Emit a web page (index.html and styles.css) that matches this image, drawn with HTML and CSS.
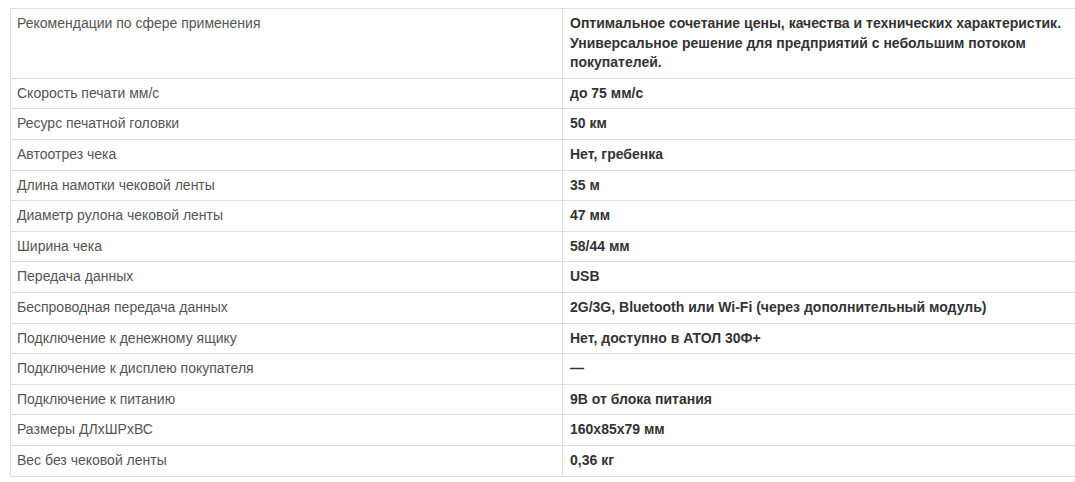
FILE: index.html
```html
<!DOCTYPE html>
<html lang="ru">
<head>
<meta charset="utf-8">
<link rel="stylesheet" href="styles.css">
</head>
<body>
<table class="specs">
  <colgroup><col class="col-name"><col class="col-value"></colgroup>
  <tbody>
    <tr><td>Рекомендации по сфере применения</td><td>Оптимальное сочетание цены, качества и технических характеристик. Универсальное решение для предприятий с небольшим потоком покупателей.</td></tr>
    <tr><td>Скорость печати мм/с</td><td>до 75 мм/с</td></tr>
    <tr><td>Ресурс печатной головки</td><td>50 км</td></tr>
    <tr><td>Автоотрез чека</td><td>Нет, гребенка</td></tr>
    <tr><td>Длина намотки чековой ленты</td><td>35 м</td></tr>
    <tr><td>Диаметр рулона чековой ленты</td><td>47 мм</td></tr>
    <tr><td>Ширина чека</td><td>58/44 мм</td></tr>
    <tr><td>Передача данных</td><td>USB</td></tr>
    <tr><td>Беспроводная передача данных</td><td>2G/3G, Bluetooth или Wi-Fi (через дополнительный модуль)</td></tr>
    <tr><td>Подключение к денежному ящику</td><td>Нет, доступно в АТОЛ 30Ф+</td></tr>
    <tr><td>Подключение к дисплею покупателя</td><td>—</td></tr>
    <tr><td>Подключение к питанию</td><td>9В от блока питания</td></tr>
    <tr><td>Размеры ДЛхШРхВС</td><td>160x85x79 мм</td></tr>
    <tr><td>Вес без чековой ленты</td><td>0,36 кг</td></tr>
  </tbody>
</table>
</body>
</html>
```
FILE: styles.css
```css
html, body {
  margin: 0;
  padding: 0;
  background: #fff;
  overflow: hidden;
}
body {
  padding: 8px 0 0 10px;
  font-family: "Liberation Sans", Arial, sans-serif;
  font-size: 14px;
}
.specs {
  border-collapse: collapse;
  table-layout: fixed;
  width: 1090px;
}
.col-name { width: 552px; }
.col-value { width: 538px; }
.specs td {
  border: 1px solid #ddd;
  padding: 5px 7px 5px 6px;
  line-height: 19.6px;
  vertical-align: top;
  color: #555;
}
.specs td + td {
  padding-left: 7px;
  color: #333;
  font-weight: bold;
}
```
